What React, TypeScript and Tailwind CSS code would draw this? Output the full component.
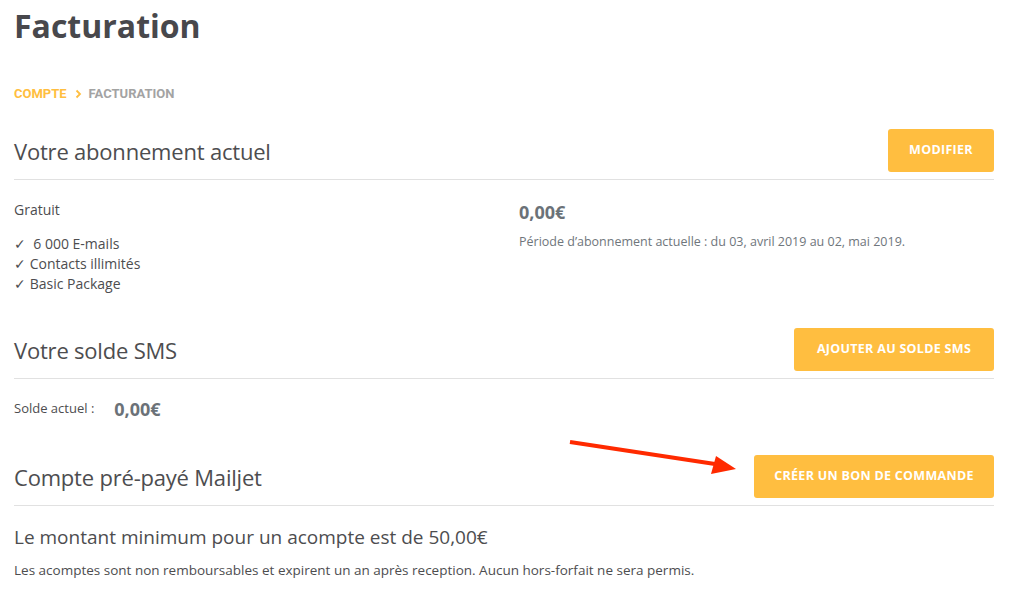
import React from 'react';

const font = { fontFamily: '"Open Sans", "Noto Sans", sans-serif' };

const Button = ({ label, width }: { label: string; width: string }) => (
  <button
    className={`h-[43px] ${width} rounded-[3px] bg-[#ffbe40] text-[12.5px] font-bold uppercase tracking-[0.3px] text-white`}
  >
    {label}
  </button>
);

const SectionHeader = ({ title, children }: { title: string; children?: React.ReactNode }) => (
  <div className="flex h-[51px] items-start justify-between border-b border-[#e1e1e1] pb-[7px]">
    <h2 className="mt-[7px] text-[22px] font-normal leading-[30px] tracking-[-0.2px] text-[#4d4d4f]">{title}</h2>
    {children}
  </div>
);

export default function App() {
  return (
    <div className="relative min-h-[599px] w-[1017px] bg-white pl-[14px] text-[#4d4d4f]" style={font}>
      <div className="w-[980px]">
        <h1 className="pt-[4px] text-[32px] font-bold leading-[44px] text-[#48484c]">Facturation</h1>

        <nav
          className="mt-[37px] flex h-[18px] items-center text-[13px] font-bold uppercase"
          style={{ fontFamily: 'Roboto, sans-serif' }}
        >
          <span className="text-[#ffbe40]">Compte</span>
          <svg width="7" height="10" viewBox="0 0 7 10" className="ml-[8px] mr-[7px]">
            <path d="M1.5 1.5 L5 5 L1.5 8.5" stroke="#ffbe40" strokeWidth="1.8" fill="none" />
          </svg>
          <span className="text-[#a3a3a3]">Facturation</span>
        </nav>

        <div className="mt-[26px]">
          <SectionHeader title="Votre abonnement actuel">
            <Button label="Modifier" width="w-[106px]" />
          </SectionHeader>
          <div className="flex pt-[20px]">
            <div className="w-[505px]">
              <div className="text-[14px] leading-[20px]">Gratuit</div>
              <ul className="mt-[14px] text-[14px] leading-[20px]">
                <li>✓ &nbsp;6 000 E-mails</li>
                <li>✓ Contacts illimités</li>
                <li>✓ Basic Package</li>
              </ul>
            </div>
            <div>
              <div className="text-[18px] font-bold leading-[24px] text-[#6b7278]">0,00€</div>
              <div className="mt-[9px] text-[12.5px] leading-[18px] text-[#6f767c]">
                Période d’abonnement actuelle : du 03, avril 2019 au 02, mai 2019.
              </div>
            </div>
          </div>
        </div>

        <div className="mt-[34px]">
          <SectionHeader title="Votre solde SMS">
            <Button label="Ajouter au solde SMS" width="w-[200px]" />
          </SectionHeader>
          <div className="mt-[18px] flex h-[24px] items-center">
            <span className="text-[13px] text-[#4d4d4f]">Solde actuel :</span>
            <span className="ml-[20px] text-[18px] font-bold text-[#6b7278]">0,00€</span>
          </div>
        </div>

        <div className="mt-[34px]">
          <SectionHeader title="Compte pré-payé Mailjet">
            <Button label="Créer un bon de commande" width="w-[240px]" />
          </SectionHeader>
          <div className="pt-[18px] text-[19px] leading-[26px]">Le montant minimum pour un acompte est de 50,00€</div>
          <div className="mt-[11px] text-[13.5px] leading-[18px]">
            Les acomptes sont non remboursables et expirent un an après reception. Aucun hors-forfait ne sera permis.
          </div>
        </div>
      </div>

      <svg className="absolute left-[565px] top-[436px]" width="180" height="45" viewBox="0 0 180 45">
        <line x1="5" y1="6" x2="150" y2="28" stroke="#ff2a00" strokeWidth="4" />
        <polygon points="171,33 146,38 151,20" fill="#ff2a00" />
      </svg>
    </div>
  );
}
